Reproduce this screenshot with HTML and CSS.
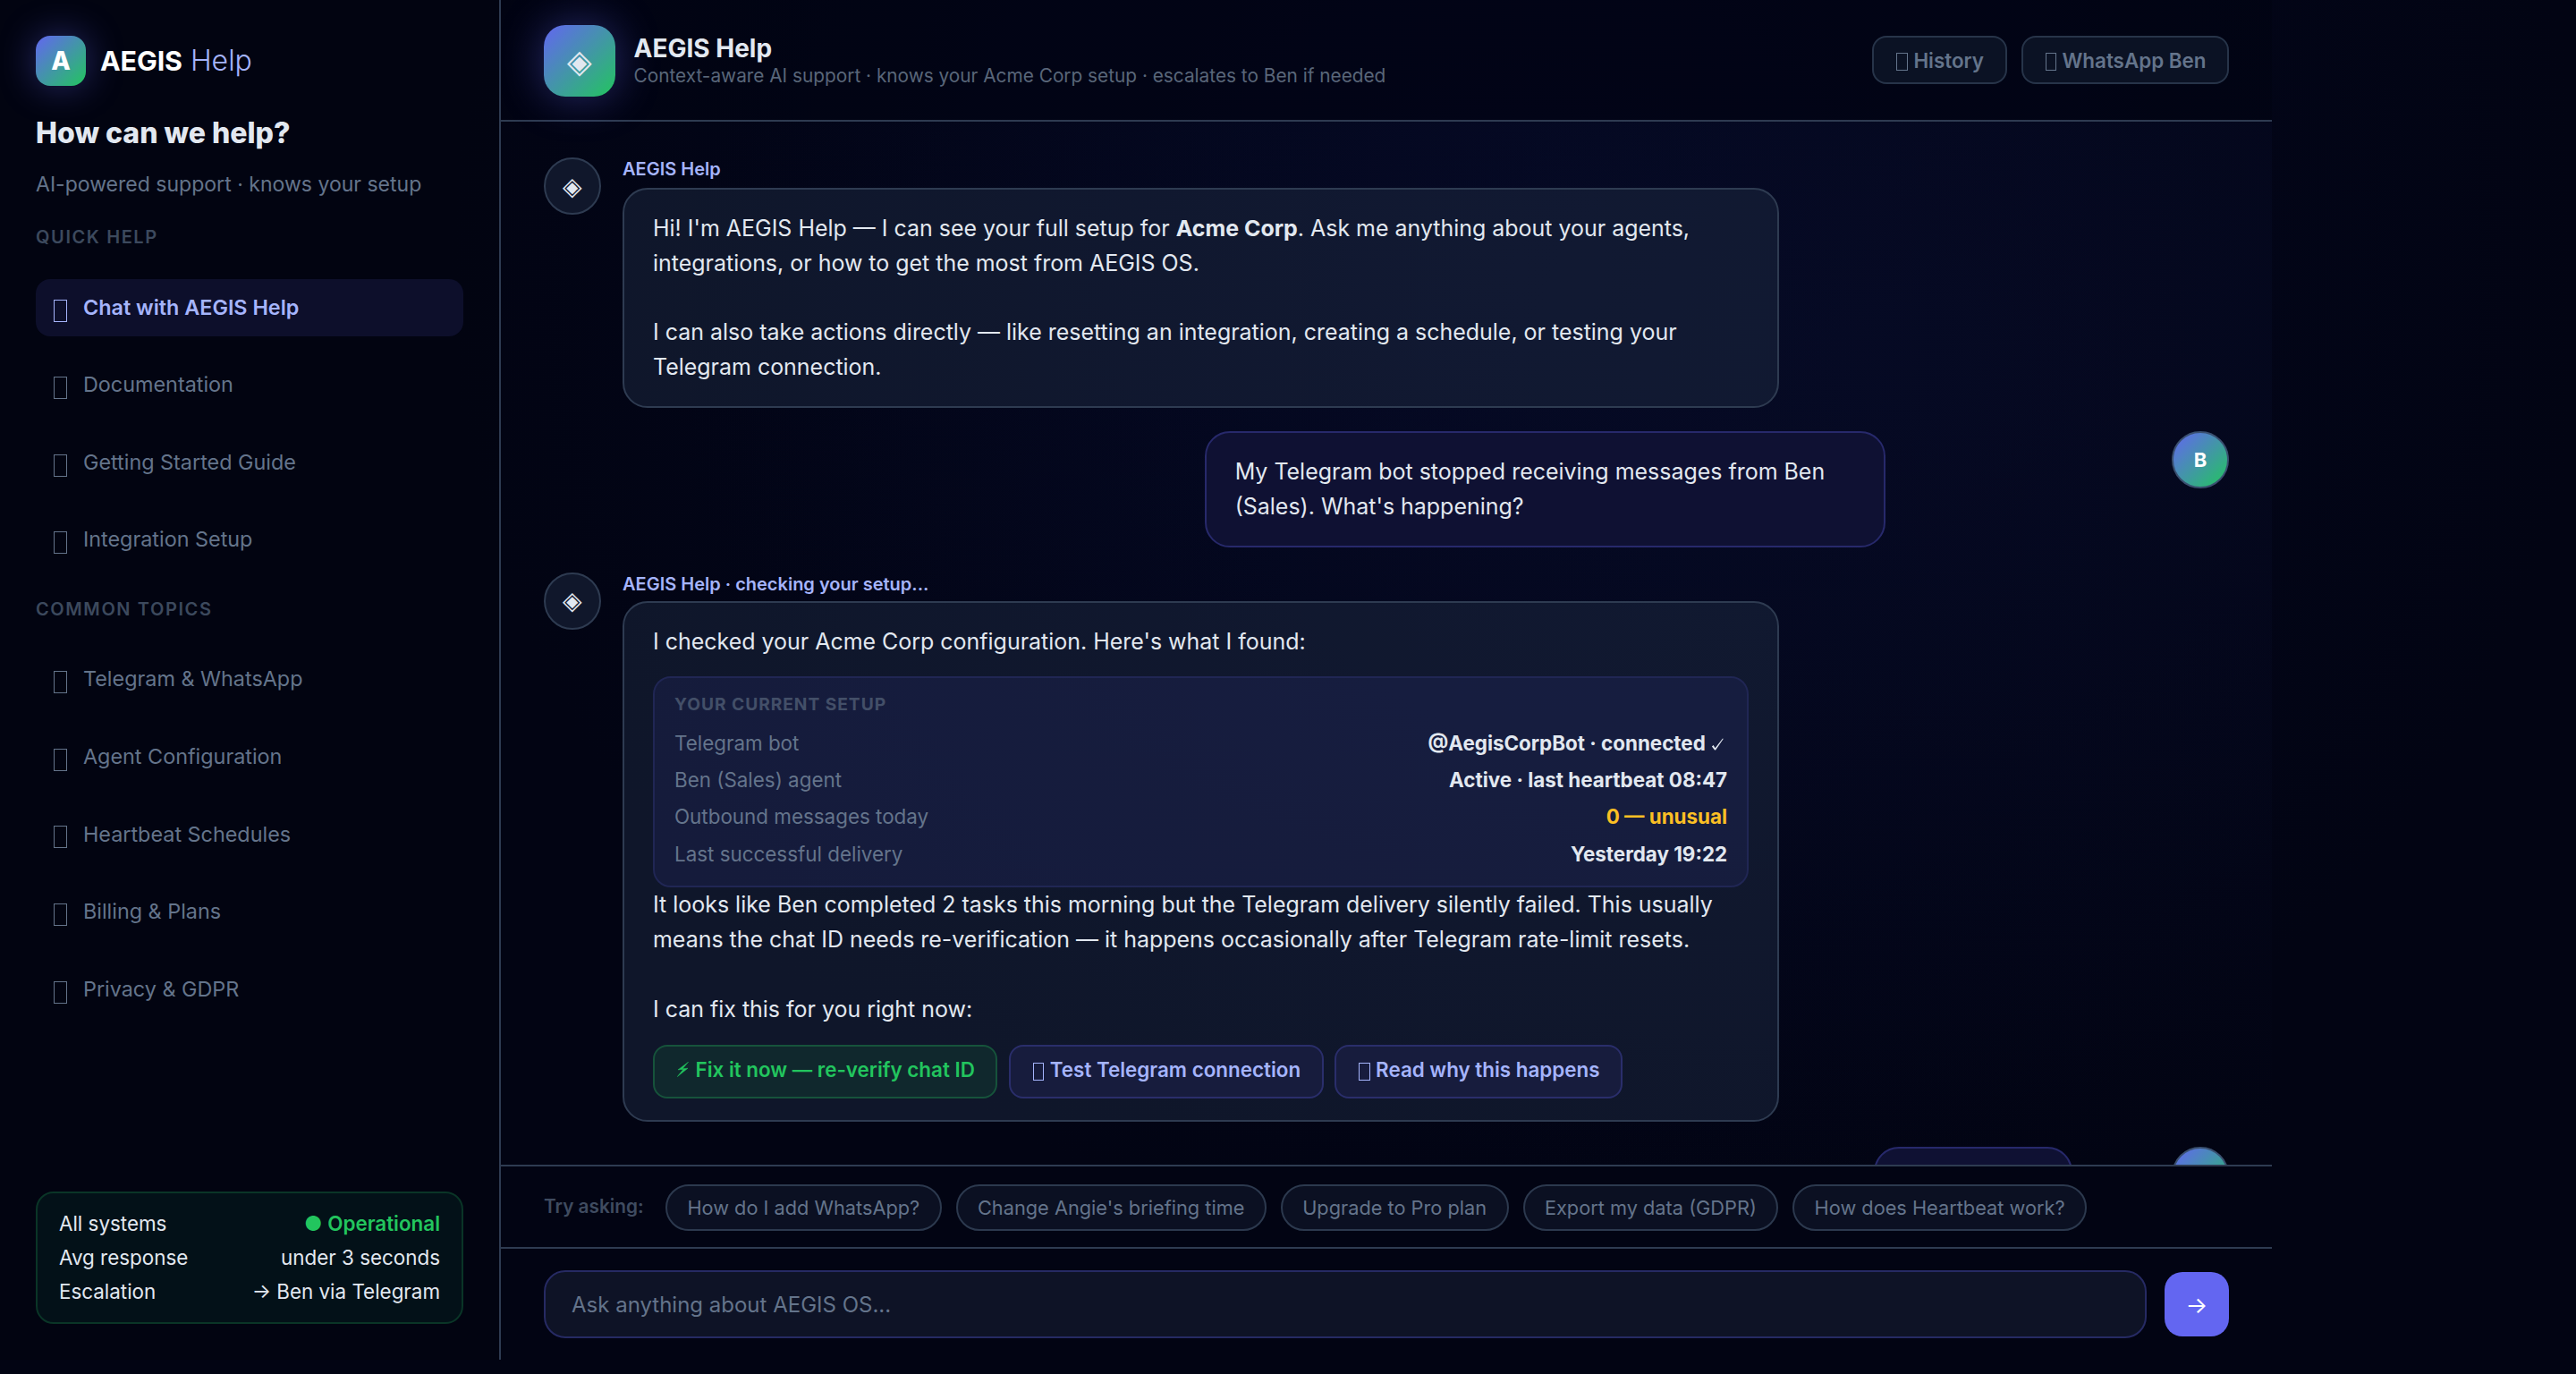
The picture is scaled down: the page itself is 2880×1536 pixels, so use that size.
FILE: index.html
```html
<!DOCTYPE html>
<html lang="en">
<head>
<meta charset="utf-8">
<title>AEGIS Help</title>
<link rel="stylesheet" href="styles.css">
</head>
<body>
<div class="app">
  <aside class="sidebar">
    <div class="logo"><div class="logo-mark">A</div><div class="logo-text"><b>AEGIS</b> <em>Help</em></div></div>
    <h1 class="side-title">How can we help?</h1>
    <p class="side-sub">AI-powered support · knows your setup</p>
    <div class="side-label">QUICK HELP</div>
    <nav class="nav">
      <a class="nav-item active"><i class="glyph"></i><span>Chat with AEGIS Help</span></a>
      <a class="nav-item"><i class="glyph"></i><span>Documentation</span></a>
      <a class="nav-item"><i class="glyph"></i><span>Getting Started Guide</span></a>
      <a class="nav-item"><i class="glyph"></i><span>Integration Setup</span></a>
    </nav>
    <div class="side-label topics">COMMON TOPICS</div>
    <nav class="nav">
      <a class="nav-item"><i class="glyph"></i><span>Telegram &amp; WhatsApp</span></a>
      <a class="nav-item"><i class="glyph"></i><span>Agent Configuration</span></a>
      <a class="nav-item"><i class="glyph"></i><span>Heartbeat Schedules</span></a>
      <a class="nav-item"><i class="glyph"></i><span>Billing &amp; Plans</span></a>
      <a class="nav-item"><i class="glyph"></i><span>Privacy &amp; GDPR</span></a>
    </nav>
    <div class="status">
      <div class="status-row"><span>All systems</span><span class="ok">● Operational</span></div>
      <div class="status-row"><span>Avg response</span><span>under 3 seconds</span></div>
      <div class="status-row"><span>Escalation</span><span>→ Ben via Telegram</span></div>
    </div>
  </aside>
  <main class="main">
    <header class="header">
      <div class="header-icon">◈</div>
      <div class="header-info">
        <div class="header-title">AEGIS Help</div>
        <div class="header-sub">Context-aware AI support · knows your Acme Corp setup · escalates to Ben if needed</div>
      </div>
      <div class="header-actions"><button class="btn"><i class="glyph"></i><span>History</span></button><button class="btn"><i class="glyph"></i><span>WhatsApp Ben</span></button></div>
    </header>
    <section class="chat">
      <div class="msg first">
        <div class="avatar">◈</div>
        <div class="body">
          <div class="name">AEGIS Help</div>
          <div class="bubble">Hi! I'm AEGIS Help — I can see your full setup for <b>Acme Corp</b>. Ask me anything about your agents, integrations, or how to get the most from AEGIS OS.<br><br>I can also take actions directly — like resetting an integration, creating a schedule, or testing your Telegram connection.</div>
        </div>
      </div>
      <div class="msg user">
        <div class="avatar">B</div>
        <div class="body"><div class="bubble">My Telegram bot stopped receiving messages from Ben (Sales). What's happening?</div></div>
      </div>
      <div class="msg">
        <div class="avatar">◈</div>
        <div class="body">
          <div class="name">AEGIS Help · checking your setup...</div>
          <div class="bubble">I checked your Acme Corp configuration. Here's what I found:
            <div class="setup">
              <div class="setup-label">YOUR CURRENT SETUP</div>
              <div class="setup-row"><span>Telegram bot</span><b>@AegisCorpBot · connected <svg class="check" width="14" height="14" viewBox="0 0 14 14"><path d="M.9 9.4 2.6 8l2 3.2L13 .4l.7.5L5.1 13.6H4z" fill="currentColor"/></svg></b></div>
              <div class="setup-row"><span>Ben (Sales) agent</span><b>Active · last heartbeat 08:47</b></div>
              <div class="setup-row"><span>Outbound messages today</span><b class="warn">0 — unusual</b></div>
              <div class="setup-row"><span>Last successful delivery</span><b>Yesterday 19:22</b></div>
            </div>
            It looks like Ben completed 2 tasks this morning but the Telegram delivery silently failed. This usually means the chat ID needs re-verification — it happens occasionally after Telegram rate-limit resets.<br><br>I can fix this for you right now:
            <div class="actions">
              <button class="act green"><svg class="bolt" width="13" height="17" viewBox="0 0 13 17"><path d="M12.6.2 1 8.9l6-.6L.3 16.6 12 7.2l-5.9.5z" fill="currentColor" stroke="currentColor" stroke-width=".5"/></svg><span>Fix it now — re-verify chat ID</span></button>
              <button class="act"><i class="glyph"></i><span>Test Telegram connection</span></button>
              <button class="act"><i class="glyph"></i><span>Read why this happens</span></button>
            </div>
          </div>
        </div>
      </div>
      <div class="msg user short">
        <div class="avatar"></div>
        <div class="body"><div class="bubble"></div></div>
      </div>
    </section>
    <div class="suggest">
      <div class="suggest-label">Try asking:</div>
      <button class="chip">How do I add WhatsApp?</button>
      <button class="chip">Change Angie's briefing time</button>
      <button class="chip">Upgrade to Pro plan</button>
      <button class="chip">Export my data (GDPR)</button>
      <button class="chip">How does Heartbeat work?</button>
    </div>
    <div class="composer">
      <div class="input">Ask anything about AEGIS OS...</div>
      <button class="send">→</button>
    </div>
  </main>
</div>
</body>
</html>
```
FILE: styles.css
```css
* { box-sizing: border-box; }
html { background: #020413; }
body {
  margin: 0;
  height: 1536px;
  overflow: hidden;
  font-family: Inter, sans-serif;
  font-size: 24.96px;
  line-height: 38.8px;
  color: #e2e8f0;
  background: radial-gradient(ellipse 1200px 1100px at 1700px 300px, #030720, #020413);
}
button { font-family: inherit; margin: 0; }
i, em { font-style: normal; }
.app { display: flex; width: 2540px; height: 1520px; }

/* empty icon box */
.glyph { flex: none; display: inline-block; width: 12.5px; height: 20px; border: 1px solid currentColor; border-bottom-width: 1.5px; position: relative; top: 2px; }

.sidebar { width: 560px; padding: 40px; border-right: 2px solid #2e3b51; background: rgba(3, 5, 18, .8); display: flex; flex-direction: column; }
.logo { display: flex; align-items: center; gap: 16px; height: 56px; }
.logo-mark { width: 56px; height: 56px; border-radius: 16px; display: grid; place-items: center; font-size: 28px; font-weight: 800; color: #fff; background: linear-gradient(135deg, #6366f1, #22c55e); box-shadow: 0 0 40px rgba(99, 102, 241, .4); }
.logo-text { font-size: 32px; color: #fff; padding-top: 1px; }
.logo-text b { font-size: 30.4px; letter-spacing: -.1px; }
.logo-text em { font-weight: 300; color: #a5b4fc; }
.side-title { margin: 29px 0 0; font-size: 32px; line-height: 48px; font-weight: 800; }
.side-sub { margin: 15px 0 0; font-size: 23.04px; line-height: 36px; color: #64748b; }
.side-label { margin-top: 25px; font-size: 20px; line-height: 32px; font-weight: 600; letter-spacing: 1.6px; color: #3c495d; }
.side-label.topics { margin-top: 29px; }
.nav { margin-top: 31px; display: flex; flex-direction: column; gap: 22.6px; }
.nav-item { height: 64px; padding: 0 20px; border-radius: 16px; display: flex; align-items: center; gap: 18px; font-size: 23.36px; color: #64748b; }
.nav-item .glyph { width: 15px; height: 25px; top: 3px; }
.nav-item.active { background: #0d0f2b; color: #a5b4fc; font-weight: 600; }
.status { margin-top: auto; height: 148px; padding: 15px 24px; border: 2px solid #0a3527; border-radius: 20px; background: #031118; font-size: 22.4px; line-height: 38px; }
.status-row { display: flex; justify-content: space-between; }
.ok { color: #22c55e; font-weight: 600; }

.main { flex: 1; min-width: 0; display: flex; flex-direction: column; }
.header { height: 136px; padding: 28px 48px 26px; border-bottom: 2px solid #2e3b51; background: rgba(2, 4, 19, .6); display: flex; align-items: center; }
.header-icon { width: 80px; height: 80px; border-radius: 24px; display: grid; place-items: center; font-size: 36px; background: linear-gradient(135deg, #6366f1, #22c55e); box-shadow: 0 0 48px rgba(99, 102, 241, .4); }
.header-info { margin-left: 20.5px; flex: 1; }
.header-title { font-size: 28px; line-height: 34px; font-weight: 700; }
.header-sub { font-size: 20.8px; line-height: 28px; color: #596679; }
.header-actions { display: flex; gap: 16px; }
.btn, .act { display: flex; align-items: center; gap: 6.5px; border: 2px solid #273449; border-radius: 16px; font-size: 22.4px; font-weight: 600; }
.btn { height: 54px; padding: 0 23.5px 0 25px; margin-top: -2px; background: #0b1224; color: #64748b; }

.chat { height: 1166px; padding: 40px 48px 0; overflow: hidden; display: flex; flex-direction: column; gap: 28px; background: radial-gradient(ellipse 1300px 950px at 1500px 250px, rgba(10, 15, 46, .45), transparent); }
.msg { display: flex; gap: 24px; flex: none; align-items: flex-start; }
.msg.first { margin-bottom: -2px; }
.avatar { flex: none; width: 64px; height: 64px; border-radius: 50%; border: 2px solid #2e3b51; background: #10172b; display: grid; place-items: center; font-size: 28px; }
.name { height: 32px; font-size: 20px; line-height: 27px; font-weight: 600; color: #a5b4fc; }
.first .name { height: 34px; }
.bubble { max-width: 72%; padding: 24px 32px; border: 2px solid #2e3b51; border-radius: 28px; background: rgba(29, 40, 64, .52); }
.user { flex-direction: row-reverse; }
.user .avatar { background: linear-gradient(135deg, #6366f1, #22c55e); border-color: #3a5070; color: #fff; font-size: 22px; font-weight: 700; }
.user .bubble { background: #0f1133; border-color: #27296b; }
.short .body { padding-right: 87px; }
.short .bubble { width: 222px; max-width: none; height: 90px; }
.setup { margin-top: 20px; height: 236px; padding: 14px 22px 12px; border: 2px solid #202654; border-radius: 20px; background: rgba(40, 42, 110, .25); }
.setup-label { font-size: 19.2px; line-height: 31px; margin-bottom: 6.5px; font-weight: 700; letter-spacing: .96px; color: #434f68; }
.setup-row { display: flex; justify-content: space-between; font-size: 22.4px; line-height: 41.3px; color: #64748b; }
.setup-row b { font-weight: 700; color: #e2e8f0; }
.setup-row .warn { color: #fbbf24; }
.check { margin: 0 4px 0 1px; }
.actions { display: flex; gap: 12.5px; margin-top: 20px; }
.act { height: 60px; padding: 0 23.5px 4px 25px; border-color: #2a2e6b; background: #171c3d; color: #a5b4fc; }
.act.green { gap: 7.5px; border-color: #16533b; background: #10282d; color: #22c55e; }

.suggest { height: 92px; padding: 20px 48px 0; border-top: 2px solid #2e3b51; background: #020413; display: flex; gap: 16px; align-items: flex-start; }
.suggest-label { width: 120px; font-size: 20.8px; line-height: 50px; color: #3f4b60; font-weight: 600; }
.chip { height: 52px; padding: 0 22.4px; border: 2px solid #2c394e; border-radius: 26px; background: #0b1022; color: #64748b; font-size: 21.76px; }
.composer { flex: 1; padding: 24px 48px; border-top: 2px solid #2e3b51; background: #020413; display: flex; gap: 20px; align-items: center; }
.input { flex: 1; height: 76px; padding: 0 29px; border: 2px solid #262a63; border-radius: 24px; background: #0e1326; color: #64748b; font-size: 24px; line-height: 74px; }
.send { width: 72px; height: 72px; border: 0; border-radius: 20px; background: #6366f1; color: #fff; font-size: 26px; padding: 0; }
```
